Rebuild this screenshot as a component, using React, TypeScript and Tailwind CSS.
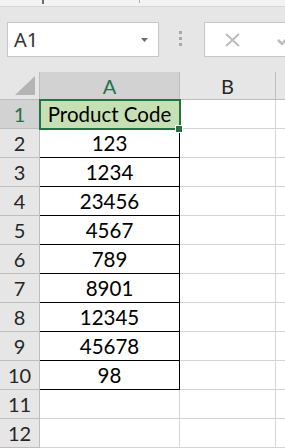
import React from 'react';

const codes = ['123', '1234', '23456', '4567', '789', '8901', '12345', '45678', '98'];

const font = { fontFamily: 'Lato, "Noto Sans", sans-serif' };

export default function App() {
  return (
    <div className="w-[285px] h-[448px] overflow-hidden bg-[#e6e6e6] select-none" style={font}>
      {/* ribbon edge */}
      <div className="relative h-[7px] bg-[#f3f3f3] border-b border-[#d6d6d6]">
        <div className="absolute left-[42px] top-0 w-[2px] h-[4px] bg-[#6b6b6b]" />
        <div className="absolute left-[139px] top-0 w-px h-[3px] bg-[#b0b0b0]" />
      </div>

      {/* formula bar */}
      <div className="flex h-[65px] pt-[15px] pl-[7px]">
        <div className="shrink-0 flex items-center justify-between w-[152px] h-[35px] bg-white border border-[#c6c6c6] pl-[6px] pr-[10px]">
          <span className="text-[20px] text-[#333] leading-none" style={{ fontFamily: '"Noto Sans", sans-serif' }}>
            A1
          </span>
          <svg width="7" height="4" viewBox="0 0 7 4">
            <polygon points="0,0 7,0 3.5,4" fill="#6d6d6d" />
          </svg>
        </div>
        <div className="shrink-0 flex flex-col gap-[3px] pt-[9px] ml-[20px] mr-[22px]">
          <div className="w-[3px] h-[3px] bg-[#a8a8a8]" />
          <div className="w-[3px] h-[3px] bg-[#a8a8a8]" />
          <div className="w-[3px] h-[3px] bg-[#a8a8a8]" />
        </div>
        <div className="min-w-0 overflow-hidden flex items-center gap-[36px] flex-1 h-[35px] bg-white border border-[#c6c6c6] border-r-0 pl-[19px]">
          <svg className="shrink-0" width="17" height="14" viewBox="0 0 17 14">
            <path d="M2 1 L15 13 M15 1 L2 13" stroke="#bdbdbd" strokeWidth="2" fill="none" />
          </svg>
          <svg className="shrink-0" width="14" height="12" viewBox="0 0 14 12">
            <path d="M1 6 L5 10 L13 1" stroke="#bdbdbd" strokeWidth="2.5" fill="none" />
          </svg>
        </div>
      </div>

      {/* sheet */}
      <div className="bg-white">
        <div className="flex h-[28px] bg-[#e6e6e6]">
          <div className="w-[40px] border-r border-b border-[#bdbdbd] flex items-end justify-end pr-[4px] pb-[4px]">
            <svg width="20" height="19" viewBox="0 0 20 19">
              <polygon points="20,0 20,19 0,19" fill="#b4b4b4" />
            </svg>
          </div>
          <div className="w-[140px] bg-[#d2d2d2] border-r border-b border-[#bdbdbd] flex items-center justify-center text-[20px] text-[#217346]">
            A
          </div>
          <div className="w-[96px] border-r border-b border-[#bdbdbd] flex items-center justify-center text-[20px] text-[#262626]">
            B
          </div>
          <div className="flex-1 border-b border-[#bdbdbd]" />
        </div>

        <div className="flex h-[29px]">
          <div className="w-[40px] bg-[#d2d2d2] border-r border-b border-[#bdbdbd] flex items-center justify-center text-[20px] text-[#217346]">
            1
          </div>
          <div className="relative w-[140px] bg-[#c6e0b4] border-r border-b border-[#000] flex items-center justify-center text-[20.5px] text-black">
            Product Code
            <div className="absolute -left-px -top-px -right-[2px] -bottom-[2px] border-2 border-[#217346]" />
            <div className="absolute -right-[4px] -bottom-[5px] w-[8px] h-[8px] bg-[#217346] border border-white" />
          </div>
          <div className="w-[96px] border-r border-b border-[#d4d4d4]" />
          <div className="flex-1 border-b border-[#d4d4d4]" />
        </div>

        {codes.map((code, i) => (
          <div key={i} className="flex h-[29px]">
            <div className="w-[40px] bg-[#e6e6e6] border-r border-b border-[#bdbdbd] flex items-center justify-center text-[20px] text-[#262626]">
              {i + 2}
            </div>
            <div className="w-[140px] border-r border-b border-black flex items-center justify-center text-[20.5px] text-black">
              {code}
            </div>
            <div className="w-[96px] border-r border-b border-[#d4d4d4]" />
            <div className="flex-1 border-b border-[#d4d4d4]" />
          </div>
        ))}

        {[11, 12].map((n) => (
          <div key={n} className="flex h-[29px]">
            <div className="w-[40px] bg-[#e6e6e6] border-r border-b border-[#bdbdbd] flex items-center justify-center text-[20px] text-[#262626]">
              {n}
            </div>
            <div className="w-[140px] border-r border-b border-[#d4d4d4]" />
            <div className="w-[96px] border-r border-b border-[#d4d4d4]" />
            <div className="flex-1 border-b border-[#d4d4d4]" />
          </div>
        ))}
      </div>
    </div>
  );
}
